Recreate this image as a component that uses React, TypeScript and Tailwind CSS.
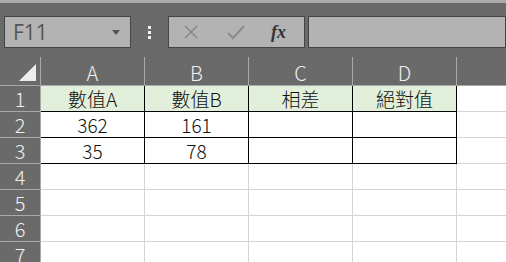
import React from "react";

const font = { fontFamily: '"Noto Sans CJK TC", "Noto Sans", sans-serif' };

const cols = ["A", "B", "C", "D"];
const data: string[][] = [
  ["數值A", "數值B", "相差", "絕對值"],
  ["362", "161", "", ""],
  ["35", "78", "", ""],
];

export default function App() {
  const rows = [1, 2, 3, 4, 5, 6, 7];
  return (
    <div className="w-[506px] h-[262px] overflow-hidden bg-[#6a6a6a] flex flex-col font-light" style={font}>
      <div className="h-[3px] bg-[#ababab] shrink-0" />
      {/* toolbar */}
      <div className="flex items-center h-[32px] mt-[13px] shrink-0">
        <div className="ml-[4px] w-[127px] h-[32px] bg-[#b3b3b3] border border-[#454545] flex items-center justify-between pl-[8px] pr-[10px]">
          <span className="text-[21px] text-[#555] leading-[24px] font-normal" style={{ fontFamily: '"Open Sans", sans-serif' }}>F11</span>
          <svg width="8" height="5" viewBox="0 0 8 5"><path d="M0 0h8L4 5z" fill="#555" /></svg>
        </div>
        <div className="w-[37px] flex flex-col items-center gap-[2px]">
          <div className="w-[3px] h-[3px] bg-[#f2f2f2]" />
          <div className="w-[3px] h-[3px] bg-[#f2f2f2]" />
          <div className="w-[3px] h-[3px] bg-[#f2f2f2]" />
        </div>
        <div className="w-[137px] h-[32px] bg-[#b3b3b3] border border-[#454545] flex items-center">
          <svg className="ml-[14px]" width="16" height="16" viewBox="0 0 16 16">
            <path d="M2 2L14 14M14 2L2 14" stroke="#8a8a8a" strokeWidth="1.6" />
          </svg>
          <svg className="ml-[28px]" width="18" height="16" viewBox="0 0 18 16">
            <path d="M1 9L6 14L17 2" stroke="#8a8a8a" strokeWidth="2" fill="none" />
          </svg>
          <span className="ml-[26px] text-[18px] italic font-bold text-[#333] leading-none" style={{ fontFamily: '"Liberation Serif", serif' }}>fx</span>
        </div>
        <div className="ml-[3px] flex-1 h-[32px] bg-[#b3b3b3] border border-[#454545]" />
      </div>
      {/* column header */}
      <div className="flex h-[29px] mt-[9px] shrink-0 border-b border-[#a8a8a8]">
        <div className="w-[41px] relative border-r border-[#a8a8a8] shrink-0">
          <svg className="absolute left-[19px] top-[7px]" width="17" height="17" viewBox="0 0 17 17">
            <path d="M17 0V17H0z" fill="#ececec" />
          </svg>
        </div>
        {cols.map((c) => (
          <div key={c} className="w-[104px] shrink-0 border-r border-[#a8a8a8] flex items-center justify-center text-[20px] text-[#f0f0f0] leading-[22px] pt-[4px]">
            {c}
          </div>
        ))}
        <div className="w-[104px] shrink-0 flex items-center justify-center pl-[2px] text-[20px] text-[#f0f0f0] leading-[22px] pt-[4px]">E</div>
      </div>
      {/* rows */}
      {rows.map((r) => (
        <div key={r} className="flex h-[26px] shrink-0">
          <div className="w-[41px] shrink-0 border-r border-b border-[#a8a8a8] flex items-center justify-center text-[20px] text-[#f0f0f0] leading-[22px]">
            {r}
          </div>
          {cols.map((c, ci) => {
            const inTable = r <= 3;
            const val = inTable ? data[r - 1][ci] : "";
            const bg = r === 1 ? "bg-[#e2efda]" : "bg-white";
            const border = inTable ? "border-r border-b border-black" : "border-r border-b border-[#d4d4d4]";
            return (
              <div key={c} className={`w-[104px] shrink-0 ${bg} ${border} flex items-center justify-center text-[19px] text-[#111] leading-[22px]`}>
                {val}
              </div>
            );
          })}
          <div className="flex-1 bg-white border-b border-[#d4d4d4]" />
        </div>
      ))}
    </div>
  );
}
